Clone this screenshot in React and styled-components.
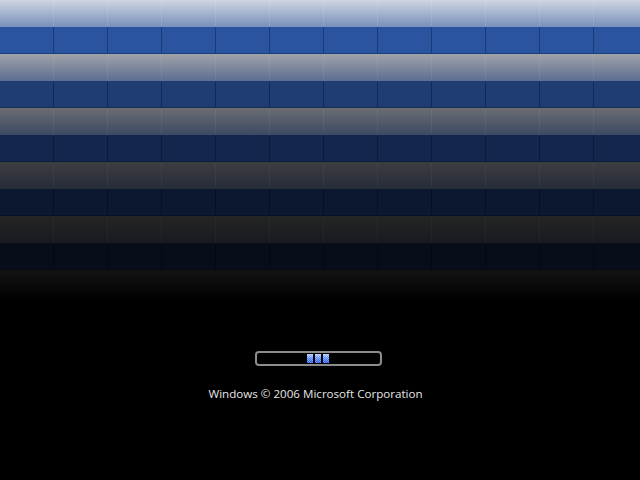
import React from "react";
import styled, { createGlobalStyle } from "styled-components";

const Global = createGlobalStyle`
  html, body { margin: 0; padding: 0; background: #000; }
  body { font-family: "Open Sans", "Noto Sans", sans-serif; }
`;

const Screen = styled.div`
  width: 640px;
  height: 480px;
  background: #000;
  display: flex;
  flex-direction: column;
  overflow: hidden;
`;

const Stripes = styled.div`
  display: flex;
  flex-direction: column;
`;

const Row = styled.div`
  height: 27px;
  display: flex;
  overflow: hidden;
  background: ${(p) => p.$bg};
  box-shadow: ${(p) => (p.$edge ? `inset 0 -1px 0 ${p.$edge}` : "none")};
`;

const Cell = styled.div`
  flex: 0 0 54px;
  box-sizing: border-box;
  border-right: 1px solid ${(p) => p.$line};
`;

const Fade = styled.div`
  height: 30px;
  background: linear-gradient(#131313, #000);
`;

const Bottom = styled.div`
  flex: 1;
  display: flex;
  flex-direction: column;
  align-items: center;
  padding-top: 51px;
  padding-right: 4px;
`;

const Bar = styled.div`
  width: 127px;
  height: 15px;
  box-sizing: border-box;
  border: 2px solid #8c8c8c;
  border-radius: 4px;
  background: #000;
  display: flex;
  justify-content: center;
  align-items: center;
  gap: 2px;
`;

const Block = styled.div`
  width: 6px;
  height: 9px;
  background:
    repeating-conic-gradient(rgba(255,255,255,0.35) 0 25%, transparent 0 50%) 0 0 / 2px 2px,
    linear-gradient(#b0ccff, #5288ff 45%, #1f52e4);
`;

const Copyright = styled.div`
  margin-top: 20px;
  margin-right: 5px;
  color: #e6e6e6;
  font-size: 11.6px;
`;

const rows = [
  { bg: "linear-gradient(#cfd5e1, #7890bb)", line: "rgba(255,255,255,0.10)" },
  { bg: "#2a53a0", line: "#1a3a7a", edge: "#1d3e7e" },
  { bg: "linear-gradient(#a0a3a9, #5b6d92)", line: "rgba(255,255,255,0.06)" },
  { bg: "#1f3c73", line: "#132a58", edge: "#162e5c" },
  { bg: "linear-gradient(#6b6d71, #3c4964)", line: "rgba(255,255,255,0.05)" },
  { bg: "#13274e", line: "#0b1a38", edge: "#0d1d3c" },
  { bg: "linear-gradient(#3d3e41, #262b37)", line: "rgba(255,255,255,0.04)" },
  { bg: "#0c1730", line: "#070f22", edge: "#081124" },
  { bg: "linear-gradient(#252525, #171a20)", line: "rgba(255,255,255,0.03)" },
  { bg: "#070d19", line: "#040810", edge: "#050911" },
];

export default function App() {
  return (
    <>
      <Global />
      <Screen>
        <Stripes>
          {rows.map((r, i) => (
            <Row key={i} $bg={r.bg} $edge={r.edge}>
              {Array.from({ length: 12 }).map((_, j) => (
                <Cell key={j} $line={r.line} />
              ))}
            </Row>
          ))}
          <Fade />
        </Stripes>
        <Bottom>
          <Bar>
            <Block />
            <Block />
            <Block />
          </Bar>
          <Copyright>Windows © 2006 Microsoft Corporation</Copyright>
        </Bottom>
      </Screen>
    </>
  );
}
